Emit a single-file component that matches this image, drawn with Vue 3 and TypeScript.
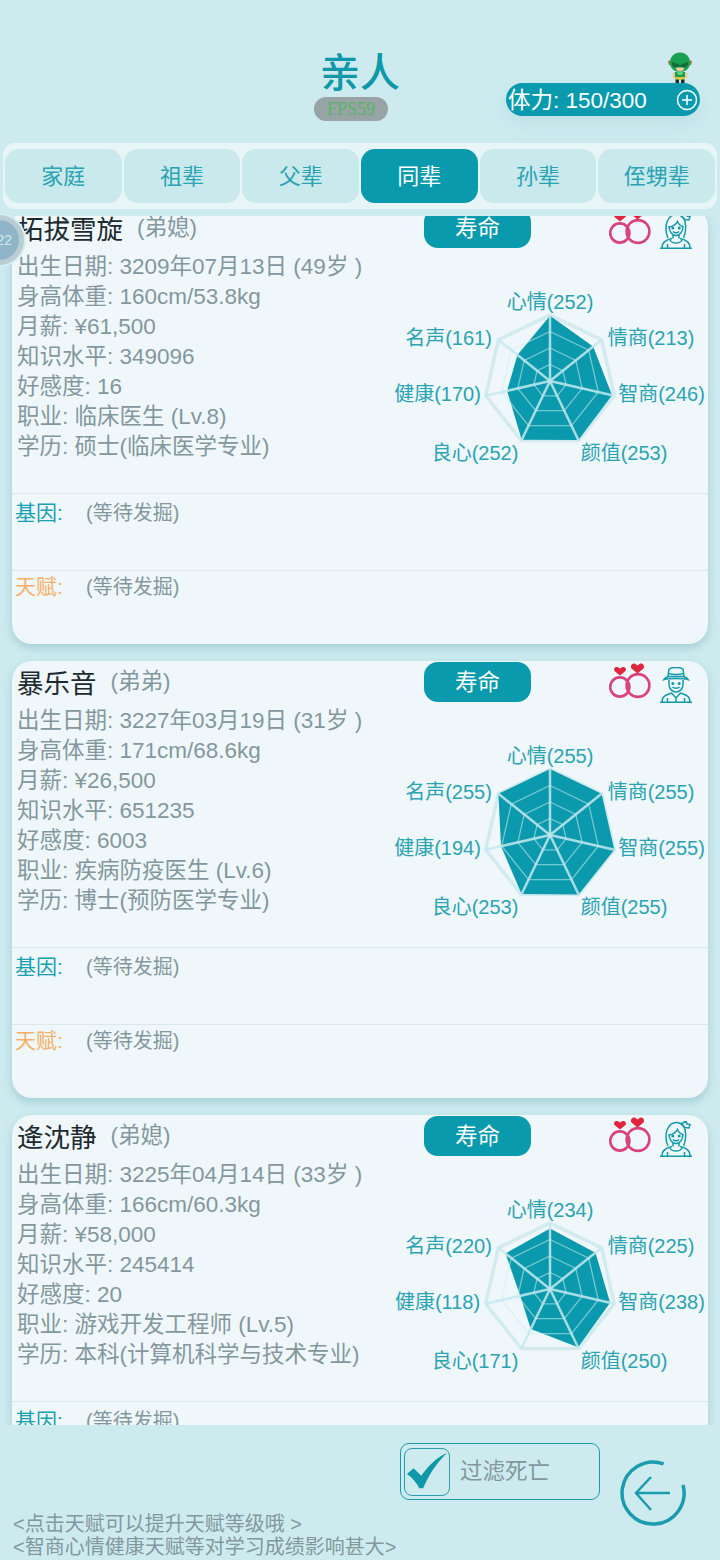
<script setup lang="ts">
interface Person {
  name: string
  relation: string
  gender: 'f' | 'm'
  lines: string[]
  stats: number[]
}

const tabs = ['家庭', '祖辈', '父辈', '同辈', '孙辈', '侄甥辈']
const activeTab = '同辈'
const axes = ['心情', '情商', '智商', '颜值', '良心', '健康', '名声']
const labelPos: [number, number][] = [
  [170, 58], [271, 94], [281.5, 150], [244, 209], [95, 209], [57.5, 150], [68.5, 94],
]
const cx = 170
const cy = 130
const radius = 66

const people: Person[] = [
  {
    name: '拓拔雪旋', relation: '(弟媳)', gender: 'f',
    lines: ['出生日期: 3209年07月13日 (49岁 )', '身高体重: 160cm/53.8kg', '月薪: ¥61,500', '知识水平: 349096', '好感度: 16', '职业: 临床医生 (Lv.8)', '学历: 硕士(临床医学专业)'],
    stats: [252, 213, 246, 253, 252, 170, 161],
  },
  {
    name: '暴乐音', relation: '(弟弟)', gender: 'm',
    lines: ['出生日期: 3227年03月19日 (31岁 )', '身高体重: 171cm/68.6kg', '月薪: ¥26,500', '知识水平: 651235', '好感度: 6003', '职业: 疾病防疫医生 (Lv.6)', '学历: 博士(预防医学专业)'],
    stats: [255, 255, 255, 255, 253, 194, 255],
  },
  {
    name: '逄沈静', relation: '(弟媳)', gender: 'f',
    lines: ['出生日期: 3225年04月14日 (33岁 )', '身高体重: 166cm/60.3kg', '月薪: ¥58,000', '知识水平: 245414', '好感度: 20', '职业: 游戏开发工程师 (Lv.5)', '学历: 本科(计算机科学与技术专业)'],
    stats: [234, 225, 238, 250, 171, 118, 220],
  },
]

function point(i: number, r: number): string {
  const a = (i * 2 * Math.PI) / 7
  return `${(cx + r * Math.sin(a)).toFixed(1)},${(cy - r * Math.cos(a)).toFixed(1)}`
}
function ring(r: number): string {
  return axes.map((_, i) => point(i, r)).join(' ')
}
function dataShape(stats: number[]): string {
  return stats.map((v, i) => point(i, (v / 255) * radius)).join(' ')
}
const rings = [16.5, 33, 49.5]
</script>

<template>
  <div class="page">
    <header class="header">
      <div></div>
      <div class="title-col">
        <h1 class="title">亲人</h1>
        <div class="fps">FPS59</div>
      </div>
      <div class="stamina-col">
        <svg class="hero" viewBox="0 0 24 31" width="24" height="31">
          <path d="M2 8L0 9.500l1 3.500 2 .5zM22 8l2 1.500-1 3.500-2 .5z" fill="#8a7a35" />
          <path d="M12 .5C6 .5 2 5 2 10.500 2 16 6 20 12 20s10-4 10-9.500C22 5 18 .5 12 .5z" fill="#17a04e" />
          <path d="M7.500 15.500h9c-.5 2.500-2.500 4-4.500 4s-4-1.500-4.500-4z" fill="#f0c8a4" />
          <path d="M4 10l5 1.800 3 1.200 3-1.200 5-1.800c.5 3-1.500 5.500-4 5.500-1.500 0-3-1-4-1s-2.500 1-4 1c-2.500 0-4.500-2.500-4-5.500z" fill="#0f6d38" />
          <path d="M7 20h10l1 6H6z" fill="#17a04e" />
          <path d="M9 20h6l-1 3h-4z" fill="#5fcf8a" />
          <rect x="7" y="25" width="10" height="2.500" fill="#e3c52f" />
          <rect x="7.500" y="27.500" width="3.500" height="3.500" fill="#1f2f28" />
          <rect x="13" y="27.500" width="3.500" height="3.500" fill="#1f2f28" />
          <rect x="4.500" y="20.500" width="2.500" height="5.500" rx="1" fill="#f0c8a4" />
          <rect x="17" y="20.500" width="2.500" height="5.500" rx="1" fill="#f0c8a4" />
        </svg>
        <div class="stamina">
          <span class="stamina-text">体力: 150/300</span>
          <svg class="plus" viewBox="0 0 22 22" width="22" height="22">
            <circle cx="11" cy="11" r="9.500" fill="none" stroke="#fff" stroke-width="1.500" />
            <path d="M6 11h10M11 6v10" stroke="#fff" stroke-width="1.500" />
          </svg>
        </div>
      </div>
    </header>

    <nav class="tabs">
      <div v-for="t in tabs" :key="t" class="tab" :class="{ active: t === activeTab }">{{ t }}</div>
    </nav>

    <main class="list">
      <div class="list-inner">
        <article v-for="p in people" :key="p.name" class="card">
          <div class="head">
            <div class="who">
              <span class="name">{{ p.name }}</span>
              <span class="relation">{{ p.relation }}</span>
            </div>
            <button class="life">寿命</button>
            <svg class="rings" viewBox="0 0 42 38" width="42" height="38">
              <circle cx="10.800" cy="25" r="9.600" fill="none" stroke="#d8437e" stroke-width="2.600" />
              <circle cx="29" cy="23.500" r="11.400" fill="none" stroke="#d8437e" stroke-width="2.600" />
              <path d="M11 13.500L5.500 9C4 6.500 6.500 4 9 5.200L11 6.500l2-1.300C15.500 4 18 6.500 16.500 9z" fill="#e0263f" />
              <path d="M28.500 11.500L22.500 6.500C20.500 3.500 24 .5 26.500 2L28.500 3.500l2-1.500C33 .5 36.500 3.500 34.500 6.500z" fill="#e0263f" />
            </svg>
            <svg v-if="p.gender === 'f'" class="person" viewBox="0 0 32 36" width="32" height="36" fill="none" stroke="#129aaa" stroke-width="1.500">
              <path d="M0 35.200h32M2 35c0-6 4-8 10-9.500M30 35c0-6-4-8-10-9.500" />
              <path d="M7.500 35v-4M24.500 35v-4M10 27c2 4 10 4 12 0" />
              <path d="M13 22v3.500M19 22v3.500" />
              <path d="M9 13c0 6 3.500 9.500 7 9.500s7-3.500 7-9.500" />
              <path d="M9 14c3-.5 7-2.500 8.500-5.500 1 2.500 3.500 4.500 5.500 5" />
              <path d="M8 25C5.500 20 5.500 13 7 9c2-5 6-7.500 9.500-7.500 4.500 0 7.500 3 8.500 7 1 5 1 11-1.500 16.500" />
              <path d="M21 3l5-3 1 3 3 .5-1 3.500-4-.5z" />
              <path d="M13 18.500c1.500 1.800 4.500 1.800 6 0" />
              <circle cx="12.800" cy="15" r=".8" fill="#129aaa" />
              <circle cx="19.200" cy="15" r=".8" fill="#129aaa" />
            </svg>
            <svg v-else class="person" viewBox="0 0 32 36" width="32" height="36" fill="none" stroke="#129aaa" stroke-width="1.500">
              <path d="M0 35.200h32M2 35c0-6 4-7 10-9M30 35c0-6-4-7-10-9" />
              <path d="M11.500 26l4.500 5 4.500-5M16 31v4M7.500 35v-4M24.500 35v-4" />
              <path d="M9 13v4c0 5 3.500 8 7 8s7-3 7-8v-4" />
              <path d="M4 12.500c4-1.500 20-1.500 24 0-1-1.500-3-2.500-4-3H8c-1 .5-3 1.500-4 3z" />
              <path d="M8 9.500L9 2c3-2 11-2 14 0l1 7.500" />
              <path d="M8.500 6.500c4 1 11 1 15 0" />
              <path d="M12.500 20c1.500 1.500 5.500 1.500 7 0" />
              <circle cx="12.800" cy="16.500" r=".8" fill="#129aaa" />
              <circle cx="19.200" cy="16.500" r=".8" fill="#129aaa" />
            </svg>
          </div>
          <div class="body">
            <ul class="info">
              <li v-for="l in p.lines" :key="l">{{ l }}</li>
            </ul>
            <svg class="radar" viewBox="0 0 328 242" width="328" height="242">
              <polygon :points="ring(radius)" class="outer" />
              <polygon :points="dataShape(p.stats)" class="shape" />
              <polygon v-for="r in rings" :key="r" :points="ring(r)" class="grid" />
              <line
                v-for="(_, i) in axes"
                :key="i"
                :x1="cx"
                :y1="cy"
                :x2="point(i, radius).split(',')[0]"
                :y2="point(i, radius).split(',')[1]"
                class="spoke"
              />
              <text
                v-for="(a, i) in axes"
                :key="a"
                :x="labelPos[i][0]"
                :y="labelPos[i][1]"
                class="label"
              >{{ a }}({{ p.stats[i] }})</text>
            </svg>
          </div>
          <section class="extra gene">
            <span class="tag">基因:</span><span class="wait">(等待发掘)</span>
          </section>
          <section class="extra talent">
            <span class="tag">天赋:</span><span class="wait">(等待发掘)</span>
          </section>
        </article>
      </div>
    </main>

    <footer class="bottom">
      <label class="filter">
        <span class="checkbox">
          <svg viewBox="0 0 46 48" width="44" height="46">
            <path d="M2 26l7-6 8 8C24 18 33 9 44 4 33 15 25 27 19 41h-4C12 35 8 30 2 26z" fill="#0e98aa" />
          </svg>
        </span>
        <span class="filter-text">过滤死亡</span>
      </label>
      <svg class="back" viewBox="0 0 68 68" width="68" height="68" fill="none" stroke="#1a9cae" stroke-width="3.500">
        <path d="M64 26A31 31 0 1 1 44.600 4.900" />
        <path d="M51 34H17M32 18L17 34l15 17" stroke-width="2.500" />
      </svg>
      <div class="notes">
        <p>&lt;点击天赋可以提升天赋等级哦 &gt;</p>
        <p>&lt;智商心情健康天赋等对学习成绩影响甚大&gt;</p>
      </div>
    </footer>

    <div class="float-ball">22</div>
  </div>
</template>

<style scoped>
.page {
  position: relative;
  width: 720px;
  height: 1560px;
  overflow: hidden;
  display: flex;
  flex-direction: column;
  background: #cdebef;
  font-family: "Liberation Sans", "Noto Sans CJK SC", sans-serif;
}
.header {
  height: 143px;
  flex: none;
  display: grid;
  grid-template-columns: 1fr 100px 1fr;
}
.title-col {
  display: flex;
  flex-direction: column;
  align-items: center;
  padding-top: 51px;
}
.title {
  margin: 0;
  font-size: 40px;
  line-height: 45px;
  font-weight: 500;
  color: #0e98aa;
  white-space: nowrap;
}
.fps {
  width: 74px;
  height: 24px;
  margin: 1px 18px 0 0;
  border-radius: 12px;
  background: #98a3a6;
  color: #58b563;
  font-size: 18px;
  line-height: 24px;
  text-align: center;
  font-family: "Liberation Serif", serif;
}
.stamina-col {
  display: flex;
  flex-direction: column;
  align-items: flex-end;
  padding: 52px 20px 0 0;
}
.hero {
  margin-right: 8px;
  flex: none;
}
.stamina {
  width: 194px;
  height: 33px;
  flex: none;
  box-sizing: border-box;
  padding: 0 2px;
  display: flex;
  align-items: center;
  justify-content: space-between;
  border-radius: 17px;
  background: #0a9aad;
  color: #fff;
  font-size: 22.5px;
  box-shadow: 0 8px 16px rgba(120, 180, 190, 0.18);
}
.stamina-text {
  padding-bottom: 4px;
}
.tabs {
  flex: none;
  height: 66px;
  margin: 0 3px;
  box-sizing: border-box;
  padding: 6px 2px;
  display: grid;
  grid-template-columns: repeat(6, 1fr);
  gap: 2px;
  border-radius: 12px;
  background: #e8f5f7;
}
.tab {
  display: flex;
  align-items: center;
  justify-content: center;
  padding-bottom: 4px;
  box-sizing: border-box;
  border-radius: 14px;
  background: #c9e9ed;
  color: #2aa3b3;
  font-size: 22px;
}
.tab.active {
  background: #0a9aad;
  color: #fff;
}
.list {
  flex: none;
  height: 1209px;
  margin-top: 7px;
  overflow: hidden;
}
.list-inner {
  margin-top: -9px;
  padding: 0 12px;
  display: flex;
  flex-direction: column;
  gap: 17px;
}
.card {
  height: 437px;
  flex: none;
  border-radius: 20px;
  background: #eff7fa;
  box-shadow: 0 4px 10px rgba(110, 170, 180, 0.45);
}
.head {
  height: 44px;
  padding-top: 1px;
  box-sizing: border-box;
  display: flex;
  align-items: flex-start;
}
.who {
  width: 412px;
  padding: 5px 0 0 5px;
  box-sizing: border-box;
  display: flex;
  align-items: center;
  gap: 14px;
}
.name {
  font-size: 26.500px;
  line-height: 34px;
  color: #1e2a30;
}
.relation {
  font-size: 22.500px;
  line-height: 26px;
  margin-bottom: 5px;
  color: #84979d;
}
.life {
  width: 107px;
  height: 40px;
  padding: 0 0 5px;
  border: 0;
  border-radius: 14px;
  background: #0a9aad;
  color: #fff;
  font-size: 22.500px;
  font-family: inherit;
}
.rings {
  margin-left: 78px;
  flex: none;
}
.person {
  margin: 5px 0 0 9px;
  flex: none;
}
.body {
  height: 242px;
  display: flex;
}
.info {
  width: 368px;
  margin: 0;
  padding: 1px 0 0 5px;
  box-sizing: border-box;
  list-style: none;
  font-size: 22.500px;
  line-height: 30px;
  color: #84979d;
  white-space: nowrap;
}
.radar {
  flex: none;
}
.outer {
  fill: none;
  stroke: #d3ebef;
  stroke-width: 3.500;
}
.shape {
  fill: #0b9aad;
}
.grid {
  fill: none;
  stroke: rgba(205, 236, 241, 0.55);
  stroke-width: 1.300;
}
.spoke {
  stroke: rgba(195, 233, 239, 0.85);
  stroke-width: 2.500;
}
.label {
  fill: #2aa3b3;
  font-size: 20px;
  text-anchor: middle;
}
.extra {
  height: 77px;
  box-sizing: border-box;
  padding: 5px 0 0 3px;
  border-top: 1px solid #dbe8eb;
  display: flex;
  align-items: flex-start;
  line-height: 28px;
}
.talent {
  padding-top: 2px;
}
.tag {
  width: 71px;
  font-size: 21px;
}
.gene .tag {
  color: #16a0b0;
}
.talent .tag {
  color: #f6b066;
}
.wait {
  font-size: 20px;
  color: #84979d;
}
.bottom {
  flex: none;
  height: 135px;
  display: grid;
  grid-template-columns: 400px 200px 120px;
  grid-template-rows: 87px 48px;
}
.filter {
  grid-column: 2;
  grid-row: 1;
  height: 57px;
  margin-top: 18px;
  box-sizing: border-box;
  padding: 3px;
  display: flex;
  align-items: center;
  gap: 9px;
  border: 1.500px solid #1a9cae;
  border-radius: 9px;
}
.checkbox {
  width: 46px;
  height: 48px;
  flex: none;
  box-sizing: border-box;
  border: 1.500px solid #2c9dae;
  border-radius: 8px;
  display: flex;
  align-items: center;
  justify-content: center;
}
.filter-text {
  font-size: 22.500px;
  padding: 0 0 6px 1px;
  color: #84979d;
}
.back {
  grid-column: 3;
  grid-row: 1 / 3;
  margin: 34px 0 0 19px;
}
.notes {
  grid-column: 1 / 3;
  grid-row: 2;
  padding: 1px 0 0 13px;
  font-size: 20px;
  line-height: 23px;
  color: #84979d;
  white-space: nowrap;
}
.notes p {
  margin: 0;
}
.float-ball {
  position: absolute;
  left: -26px;
  top: 215px;
  width: 50px;
  height: 50px;
  box-sizing: border-box;
  border-radius: 50%;
  border: 5px solid #b9cdd2;
  background: #8fb6c8;
  box-shadow: 0 0 0 2px #d5eef2;
  color: #d4e6ec;
  font-size: 14px;
  line-height: 40px;
  text-align: right;
  padding-right: 7px;
}
</style>
